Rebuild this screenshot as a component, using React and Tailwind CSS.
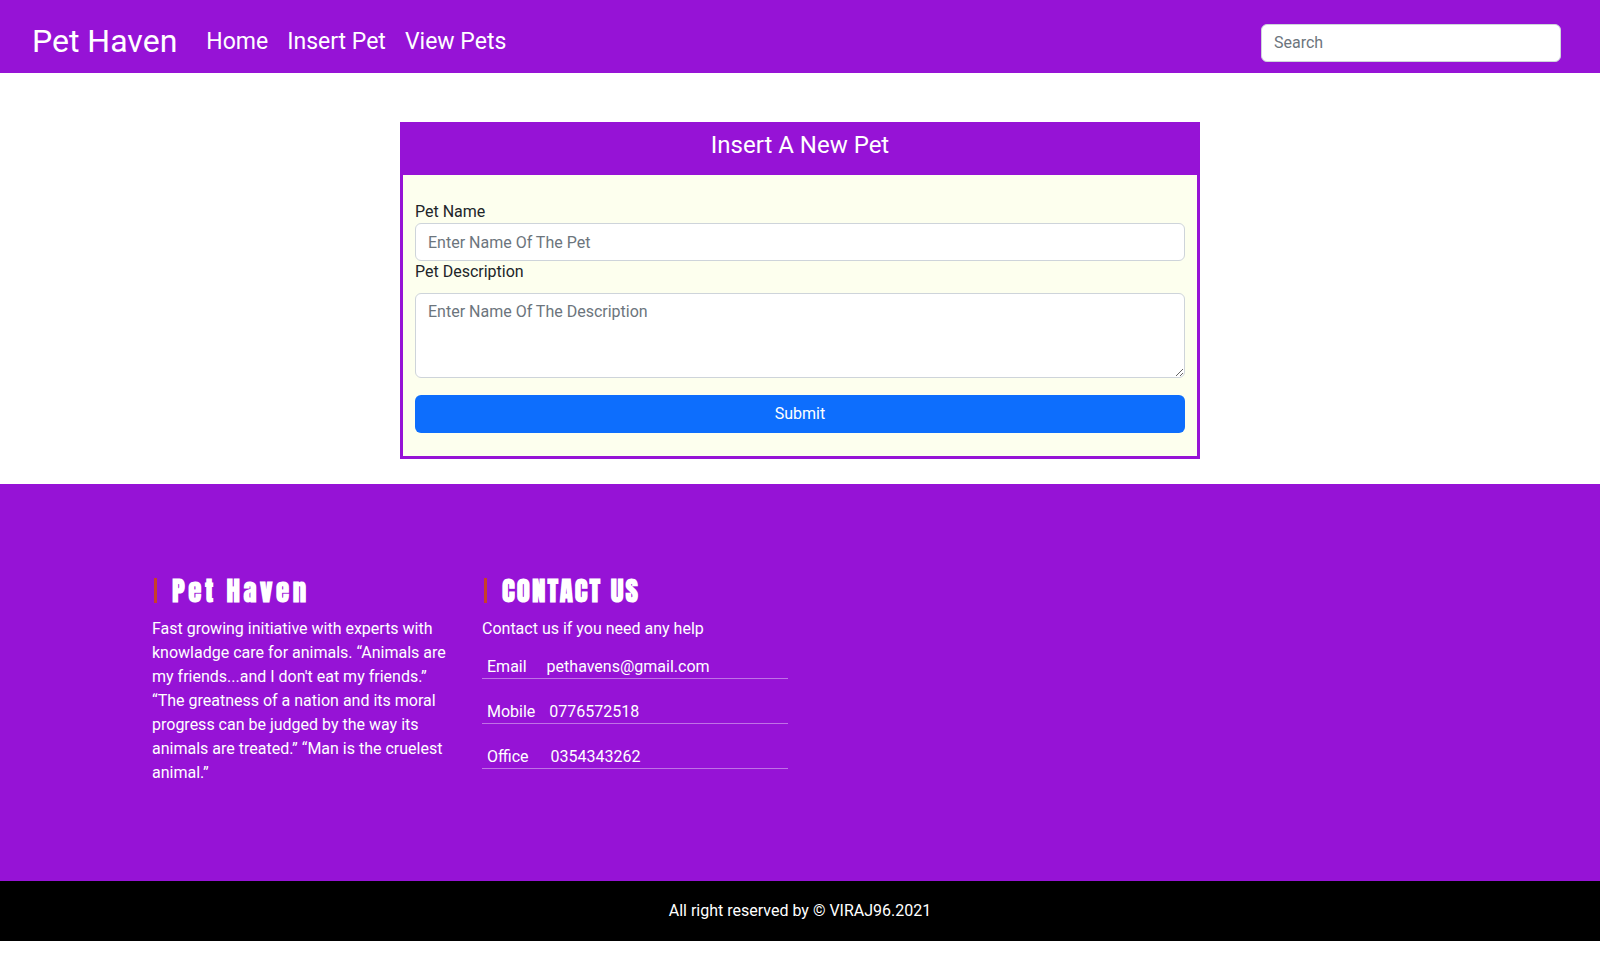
import { useState } from "react";

const PURPLE = "bg-[#9613d6]";

const Navbar = () => (
  <nav className={`${PURPLE} h-[73px] flex items-center justify-between pl-8 pr-[39px] pt-[8px]`}>
    <div className="flex items-center">
      <a href="#" className="text-[32px] leading-none text-white">
        Pet Haven
      </a>
      <ul className="flex items-center gap-[19px] ml-[29px] mt-[3px] text-[23px] text-white">
        <li>Home</li>
        <li>Insert Pet</li>
        <li>View Pets</li>
      </ul>
    </div>
    <input
      type="search"
      placeholder="Search"
      className="w-[300px] h-[38px] mt-[4px] px-3 rounded-md bg-white text-[16px] text-gray-700 placeholder:text-[#6c757d] outline-none border border-[#ced4da]"
      aria-label="Search"
    />
  </nav>
);

const InsertForm = () => {
  const [name, setName] = useState("");
  const [desc, setDesc] = useState("");

  return (
    <div className="w-[800px] mx-auto border-[3px] border-[#9613d6]">
      <div className={`${PURPLE} h-[53px] -mt-[3px] pb-[7px] flex items-center justify-center text-[24px] text-white`}>
        Insert A New Pet
      </div>
      <form
        className="bg-[#fdffee] px-3 pt-[26px] pb-[23px] text-[#212529]"
        onSubmit={(e) => e.preventDefault()}
      >
        <label className="block text-[16px] leading-[22px]">Pet Name</label>
        <input
          type="text"
          value={name}
          onChange={(e) => setName(e.target.value)}
          placeholder="Enter Name Of The Pet"
          className="block w-full h-[38px] px-3 rounded-md border border-[#ced4da] bg-white text-[16px] placeholder:text-[#6c757d] outline-none"
        />
        <label className="block text-[16px] leading-[22px] mb-[10px]">Pet Description</label>
        <textarea
          value={desc}
          onChange={(e) => setDesc(e.target.value)}
          placeholder="Enter Name Of The Description"
          className="block w-full h-[85px] px-3 py-[6px] rounded-md border border-[#ced4da] bg-white text-[16px] leading-6 placeholder:text-[#6c757d] outline-none"
        />
        <button
          type="submit"
          className="mt-[17px] w-full h-[38px] rounded-md bg-[#0d6efd] text-white text-[16px]"
        >
          Submit
        </button>
      </form>
    </div>
  );
};

const FooterHeading = ({ children, tracking }) => (
  <h4 className="flex items-center h-[34px] -mt-[2px] mb-[10px]">
    <span className="w-[3px] h-[25px] bg-[#c7402a] mr-[15px] ml-[2px]" />
    <span
      className={`text-[27px] leading-none text-white font-black [font-family:Impact,'Anton','DejaVu_Sans_Condensed','Liberation_Sans_Narrow',sans-serif] ${tracking}`}
    >
      {children}
    </span>
  </h4>
);

const contacts = [
  { label: "Email", value: "pethavens@gmail.com", gap: "ml-[20px]" },
  { label: "Mobile", value: "0776572518", gap: "ml-[14px]" },
  { label: "Office", value: "0354343262", gap: "ml-[22px]" },
];

const Footer = () => (
  <footer>
    <div className={`${PURPLE} pt-[91px] pb-[96px]`}>
      <div className="w-[1320px] mx-auto flex text-white">
        <div className="w-[330px] px-3">
          <FooterHeading tracking="tracking-[3.5px]">Pet Haven</FooterHeading>
          <p className="text-[16px] leading-6">
            Fast growing initiative with experts with knowladge care for animals.
            “Animals are my friends...and I don't eat my friends.” “The greatness of a
            nation and its moral progress can be judged by the way its animals are
            treated.” “Man is the cruelest animal.”
          </p>
        </div>
        <div className="w-[330px] px-3">
          <FooterHeading tracking="tracking-[2px]">CONTACT US</FooterHeading>
          <p className="text-[16px] leading-6">Contact us if you need any help</p>
          <ul className="mt-[15px] flex flex-col gap-[22px]">
            {contacts.map((c) => (
              <li
                key={c.label}
                className="text-[16px] leading-[22px] pl-[5px] border-b border-white/40"
              >
                <span>{c.label}</span>
                <span className={c.gap}>{c.value}</span>
              </li>
            ))}
          </ul>
        </div>
      </div>
    </div>
    <div className="bg-black h-[60px] flex items-center justify-center text-white text-[16px]">
      All right reserved by © VIRAJ96.2021
    </div>
  </footer>
);

export default function App() {
  return (
    <div className="min-h-screen bg-white [font-family:'Segoe_UI',Roboto,'Noto_Sans',sans-serif]">
      <Navbar />
      <main className="pt-[49px] pb-[25px]">
        <InsertForm />
      </main>
      <Footer />
    </div>
  );
}
